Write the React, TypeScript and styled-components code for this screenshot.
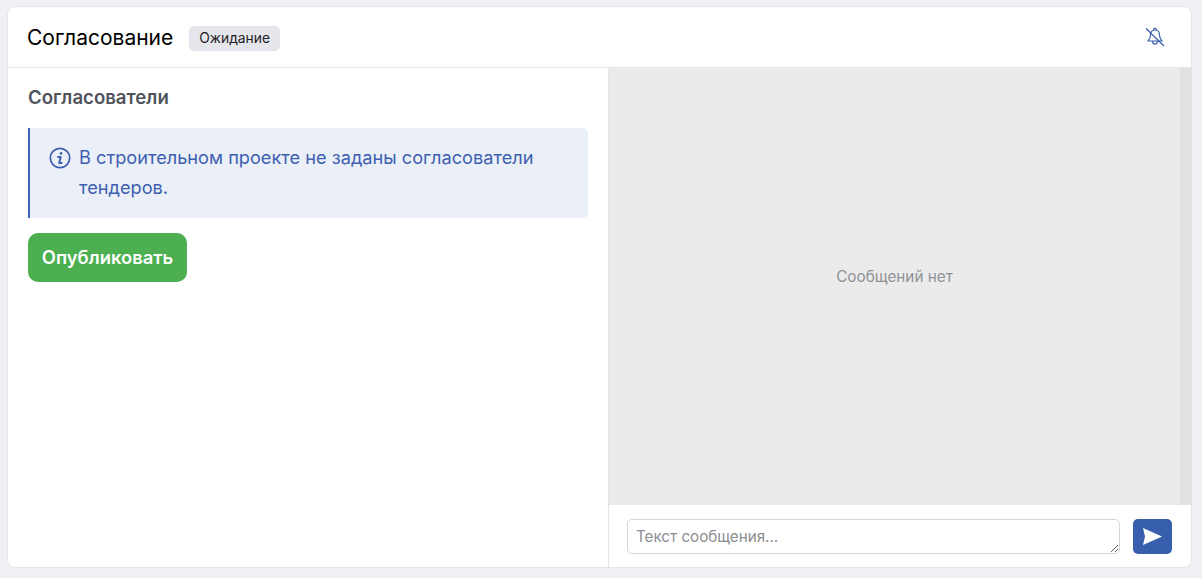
import React from "react";
import styled, { createGlobalStyle } from "styled-components";

const GlobalStyle = createGlobalStyle`
  html, body {
    margin: 0;
    height: 100%;
    background: #eff1f4;
    font-family: Inter, "Liberation Sans", sans-serif;
  }
  * { box-sizing: border-box; }
`;

const Page = styled.div`
  height: 578px;
  padding: 6px 10px 10px 7px;
`;

const Card = styled.section`
  height: 100%;
  display: flex;
  flex-direction: column;
  background: #fff;
  border: 1px solid #e4e5ea;
  border-radius: 8px;
  overflow: hidden;
`;

const Header = styled.header`
  flex: 0 0 61px;
  display: flex;
  align-items: center;
  gap: 16px;
  padding: 0 26px 0 19px;
  border-bottom: 1px solid #e4e5ea;
`;

const Title = styled.h1`
  margin: 0;
  font-size: 21px;
  font-weight: 400;
  color: #000;
`;

const Badge = styled.span`
  margin-top: 2px;
  padding: 0 10px;
  height: 25px;
  display: flex;
  align-items: center;
  border-radius: 5px;
  background: #e4e6ec;
  font-size: 13.8px;
  color: #1e2024;
`;

const BellButton = styled.button`
  margin-left: auto;
  padding: 0;
  border: 0;
  background: none;
  display: flex;
  color: #3d5fb0;
`;

const Body = styled.div`
  flex: 1;
  min-height: 0;
  display: grid;
  grid-template-columns: 601px 1fr;
`;

const LeftPanel = styled.div`
  padding: 18px 20px 0 20px;
  border-right: 1px solid #e4e5ea;
`;

const SectionTitle = styled.h2`
  margin: 0 0 20px;
  font-size: 18.6px;
  line-height: 22px;
  font-weight: 600;
  color: #50535c;
`;

const Notice = styled.div`
  display: flex;
  gap: 8px;
  padding: 14px 20px 16px 19px;
  background: #eaeff8;
  border-left: 2px solid #3a62b8;
  border-radius: 0 5px 5px 0;
  font-size: 18.2px;
  line-height: 30px;
  color: #3f5fb0;
`;

const NoticeIcon = styled.svg`
  flex: 0 0 22px;
  width: 22px;
  height: 22px;
  margin-top: 5px;
`;

const PublishButton = styled.button`
  display: block;
  margin-top: 15px;
  height: 49px;
  width: 159px;
  padding: 0 0 2px;
  border: 0;
  border-radius: 10px;
  background: #4caf50;
  color: #fff;
  font-family: inherit;
  font-size: 18.4px;
  font-weight: 600;
`;

const ChatPanel = styled.div`
  display: flex;
  flex-direction: column;
  min-height: 0;
`;

const Messages = styled.div`
  flex: 1;
  display: flex;
  align-items: center;
  justify-content: center;
  padding-bottom: 20px;
  background: #ebebeb;
  border-right: 11px solid #e1e1df;
  font-size: 15.3px;
  color: #8f9296;
`;

const Composer = styled.div`
  flex: 0 0 62px;
  display: flex;
  align-items: center;
  gap: 13px;
  padding: 0 19px 0 18px;
`;

const MessageInput = styled.textarea`
  flex: 1;
  height: 35px;
  padding: 7px 8px;
  border: 1px solid #d5d6da;
  border-radius: 5px;
  font-family: inherit;
  font-size: 15.2px;
  line-height: 19px;
  outline: none;

  &::placeholder {
    color: #8b8e92;
  }
`;

const SendButton = styled.button`
  flex: 0 0 39px;
  height: 35px;
  padding: 0;
  border: 0;
  border-radius: 5px;
  background: #385fae;
  display: flex;
  align-items: center;
  justify-content: center;
`;

export default function App() {
  return (
    <Page>
      <GlobalStyle />
      <Card>
        <Header>
          <Title>Согласование</Title>
          <Badge>Ожидание</Badge>
          <BellButton>
            <svg width="20" height="20" viewBox="0 0 20 20" fill="none" stroke="currentColor" strokeWidth="1.2" strokeLinejoin="round">
              <path d="M10 3C7 3 5.600 5 5.600 7.500c0 2.800-.8 4.300-2.600 6.500h14c-1.800-2.200-2.600-3.700-2.600-6.500C14.400 5 13 3 10 3z" />
              <path d="M8.500 3.200C8.600 1.900 9.200 1.200 10 1.200s1.400.7 1.500 2M7.500 14c0 1.900 1.100 3.200 2.500 3.200s2.500-1.300 2.500-3.200" />
              <path d="M1 1.500l18 17.500" />
            </svg>
          </BellButton>
        </Header>
        <Body>
          <LeftPanel>
            <SectionTitle>Согласователи</SectionTitle>
            <Notice>
              <NoticeIcon viewBox="0 0 22 22" fill="none" stroke="currentColor">
                <circle cx="11" cy="11" r="9.700" strokeWidth="1.700" />
                <path d="M12 6.400h.1" strokeWidth="2.600" strokeLinecap="round" />
                <path d="M9 10h2.700l-1.500 6h2.400" strokeWidth="1.900" strokeLinecap="round" strokeLinejoin="round" />
              </NoticeIcon>
              <span>В строительном проекте не заданы согласователи тендеров.</span>
            </Notice>
            <PublishButton>Опубликовать</PublishButton>
          </LeftPanel>
          <ChatPanel>
            <Messages>Сообщений нет</Messages>
            <Composer>
              <MessageInput placeholder="Текст сообщения..." />
              <SendButton>
                <svg width="19" height="17" viewBox="0 0 19 17">
                  <path d="M0 0L19 8.500L0 17L2 8.500z" fill="#fff" />
                </svg>
              </SendButton>
            </Composer>
          </ChatPanel>
        </Body>
      </Card>
    </Page>
  );
}
